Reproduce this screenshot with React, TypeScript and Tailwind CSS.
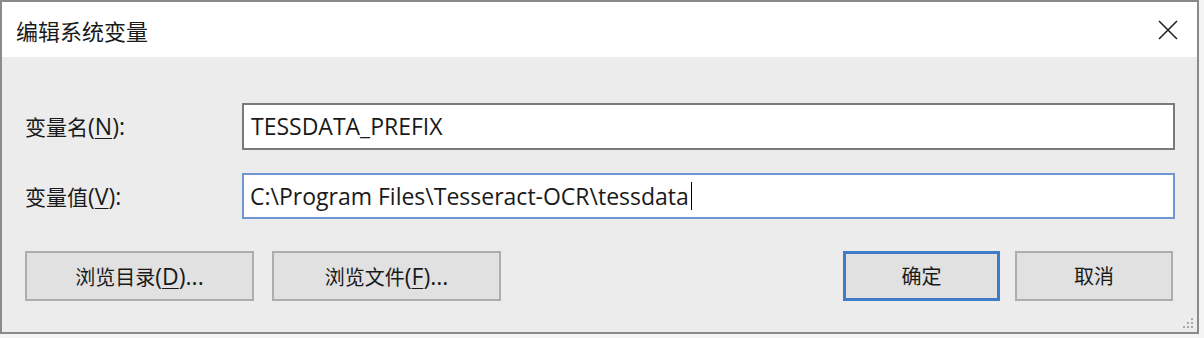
import React from 'react';

const cjk = { fontFamily: '"Noto Sans CJK SC", sans-serif' };
const latin = { fontFamily: '"Open Sans", "Noto Sans CJK SC", sans-serif' };

function Mnemonic({ children }: { children: React.ReactNode }) {
  return <span className="underline underline-offset-[3px] decoration-1">{children}</span>;
}

export default function App() {
  return (
    <div className="w-[1204px] h-[338px] bg-[#f4f4f4] text-[#1a1a1a]" style={cjk}>
      <div className="w-[1199px] h-[334px] border-2 border-[#8a8a8a] flex flex-col">
        {/* barre de titre */}
        <div className="h-[55px] bg-white flex items-center justify-between pl-[14px] pr-[19px]">
          <span className="text-[22px] leading-none">编辑系统变量</span>
          <svg width="20" height="20" viewBox="0 0 20 20">
            <path d="M1 1 L19 19 M19 1 L1 19" stroke="#222" strokeWidth="1.6" />
          </svg>
        </div>

        {/* contenu */}
        <div className="relative flex-1 bg-[#ececec] pl-[23px] pr-[22px] pt-[46px]">
          <div className="flex items-center">
            <label className="w-[217px] text-[21px]">
              变量名<span className="text-[23px]" style={latin}>(<Mnemonic>N</Mnemonic>):</span>
            </label>
            <div className="flex-1 h-[47px] bg-white border-2 border-[#7a7a7a] flex items-center pl-[7px] text-[23px]" style={latin}>
              TESSDATA_PREFIX
            </div>
          </div>
          <div className="flex items-center mt-[23px]">
            <label className="w-[217px] text-[21px]">
              变量值<span className="text-[23px]" style={latin}>(<Mnemonic>V</Mnemonic>):</span>
            </label>
            <div className="flex-1 h-[46px] bg-white border-2 border-[#6f95d3] flex items-center pl-[6px] text-[23px]" style={latin}>
              <span>C:\Program Files\Tesseract-OCR\tessdata</span>
              <span className="ml-[2px] w-px h-[28px] bg-black" />
            </div>
          </div>

          <div className="flex items-center mt-[32px] pr-[2px]">
            <button className="w-[229px] h-[50px] bg-[#e1e1e1] border-2 border-[#adadad] text-[20px]">
              浏览目录<span className="text-[23px]" style={latin}>(<Mnemonic>D</Mnemonic>)...</span>
            </button>
            <button className="ml-[18px] w-[229px] h-[50px] bg-[#e1e1e1] border-2 border-[#adadad] text-[20px]">
              浏览文件<span className="text-[23px]" style={latin}>(<Mnemonic>F</Mnemonic>)...</span>
            </button>
            <div className="flex-1" />
            <button className="w-[157px] h-[50px] bg-[#e1e1e1] border-[3px] border-[#3f7bc8] text-[20px]">
              确定
            </button>
            <button className="ml-[15px] w-[158px] h-[50px] bg-[#e1e1e1] border-2 border-[#adadad] text-[20px]">
              取消
            </button>
          </div>

          {/* poignée de redimensionnement */}
          <svg className="absolute right-[3px] bottom-[3px]" width="12" height="12" viewBox="0 0 12 12">
            {[[9, 1], [5, 5], [9, 5], [1, 9], [5, 9], [9, 9]].map(([x, y], i) => (
              <rect key={i} x={x} y={y} width="2" height="2" fill="#a8a8a8" />
            ))}
          </svg>
        </div>
      </div>
    </div>
  );
}
